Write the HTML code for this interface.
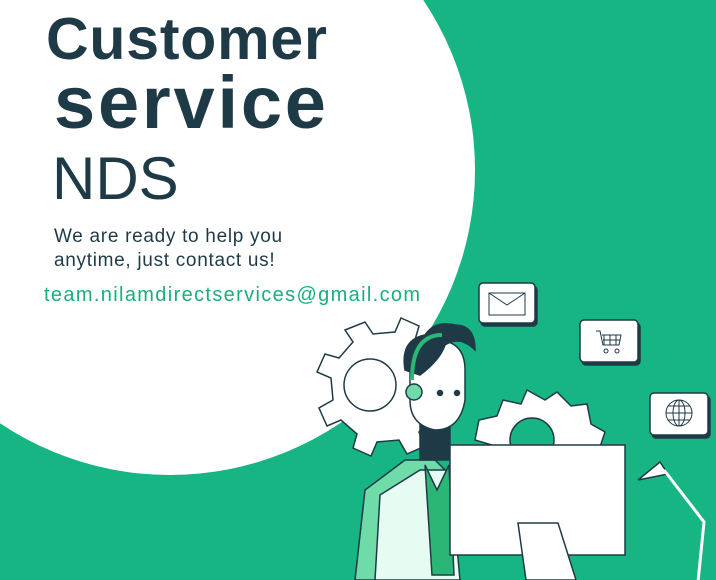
<!DOCTYPE html>
<html><head><meta charset="utf-8"><style>
html,body{margin:0;padding:0}
body{width:716px;height:580px;overflow:hidden;background:#17b584;position:relative;font-family:"Liberation Sans",sans-serif}
.circ{position:absolute;left:-135px;top:-135px;width:610px;height:610px;border-radius:50%;background:#fff}
.t{position:absolute;color:#1f3a47;white-space:nowrap}
</style></head><body>
<div class="circ"></div>
<svg width="716" height="580" style="position:absolute;left:0;top:0">
<g stroke="#1f3a47" stroke-width="1.5" fill="#fff">
<path d="M345 330 l20-8 8 12 22-2 6-14 18 8-4 14 16 14 14-6 8 18-14 8 2 22 14 6-8 18-14-4-14 16 6 14-18 8-8-14-22 2-6 14-18-8 4-14-16-14-14 6-8-18 14-8-2-22-14-6 8-18 14 4 14-16z" fill="#fff"/>
<circle cx="370" cy="385" r="26" fill="#fff"/>
<path d="M475 440 l4-20 18-4 6-16 18 4 6-14 18 10 12-8 14 14 16-2 4 20 14 8-6 18 10 12-14 14z" fill="#fff"/>
<circle cx="532" cy="440" r="22" fill="#17b584"/>
<rect x="481" y="286" width="56" height="40" rx="4" fill="#1f3a47"/><rect x="479" y="283" width="56" height="40" rx="4"/>
<path d="M489 293h36v22h-36zM489 293l18 12 18-12" fill="none" stroke-width="1"/>
<rect x="582" y="323" width="58" height="42" rx="4" fill="#1f3a47"/><rect x="580" y="320" width="58" height="42" rx="4"/>
<path d="M596 331h4l3 14h16l2-10h-19M604 345v-10M610 345v-10M616 345v-10M603 340h17" fill="none" stroke-width="1"/>
<circle cx="606" cy="351" r="2" fill="none" stroke-width="1"/><circle cx="617" cy="351" r="2" fill="none" stroke-width="1"/>
<rect x="652" y="396" width="58" height="42" rx="4" fill="#1f3a47"/><rect x="650" y="393" width="58" height="42" rx="4"/>
<circle cx="679" cy="413" r="13" fill="none" stroke-width="1"/><ellipse cx="679" cy="413" rx="6" ry="13" fill="none" stroke-width="1"/><path d="M666 413h26M679 400v26M668 406h22M668 420h22" fill="none" stroke-width="1"/>
<path d="M638 480l22-18 8 12z" fill="#fff"/><path d="M664 470l40 52-6 60" fill="none" stroke-width="3" stroke="#fff"/>
<path d="M355 580 l10-90 40-30 30 0 20 20 0 100z" fill="#6fdba8"/>
<path d="M375 580 l5-85 40-25 30 0 10 110z" fill="#e6fbf1"/>
<path d="M425 465 l12 25 12-25 5 110h-22z" fill="#2bb676"/>
<path d="M420 420 q15 20 30 0 v40 h-30z" fill="#1f3a47"/>
<path d="M410 370 q0-30 25-30 q30 0 30 30 v30 q-5 30-30 30 q-25-5-25-30z" fill="#fff"/>
<path d="M405 370 q-5-30 20-35 q10-15 30-10 q20 0 20 25 q-15-15-30-5 q-5 15-25 30z" fill="#1f3a47"/>
<path d="M412 380 q0-45 30-45" fill="none" stroke="#2bb676" stroke-width="4"/>
<circle cx="414" cy="392" r="8" fill="#6fdba8"/>
<circle cx="440" cy="393" r="2.5" fill="#1f3a47"/><circle cx="457" cy="393" r="2.5" fill="#1f3a47"/>
<rect x="450" y="445" width="175" height="110" fill="#fff"/>
<path d="M518 523h40l18 57h-50z" fill="#fff"/>
</g>
</svg>
<div class="t" style="left:46px;top:5px;font-size:59px;font-weight:bold;letter-spacing:0.8px">Customer</div>
<div class="t" style="left:54px;top:60px;font-size:74px;font-weight:bold;letter-spacing:2.8px">service</div>
<div class="t" style="left:52px;top:144px;font-size:60px">NDS</div>
<div class="t" style="left:54px;top:225px;font-size:19px;line-height:24px;letter-spacing:0.7px">We are ready to help you<br>anytime, just contact us!</div>
<div class="t" style="left:44px;top:284px;font-size:20px;color:#1aae7c;letter-spacing:1.35px">team.nilamdirectservices@gmail.com</div>
</body></html>
